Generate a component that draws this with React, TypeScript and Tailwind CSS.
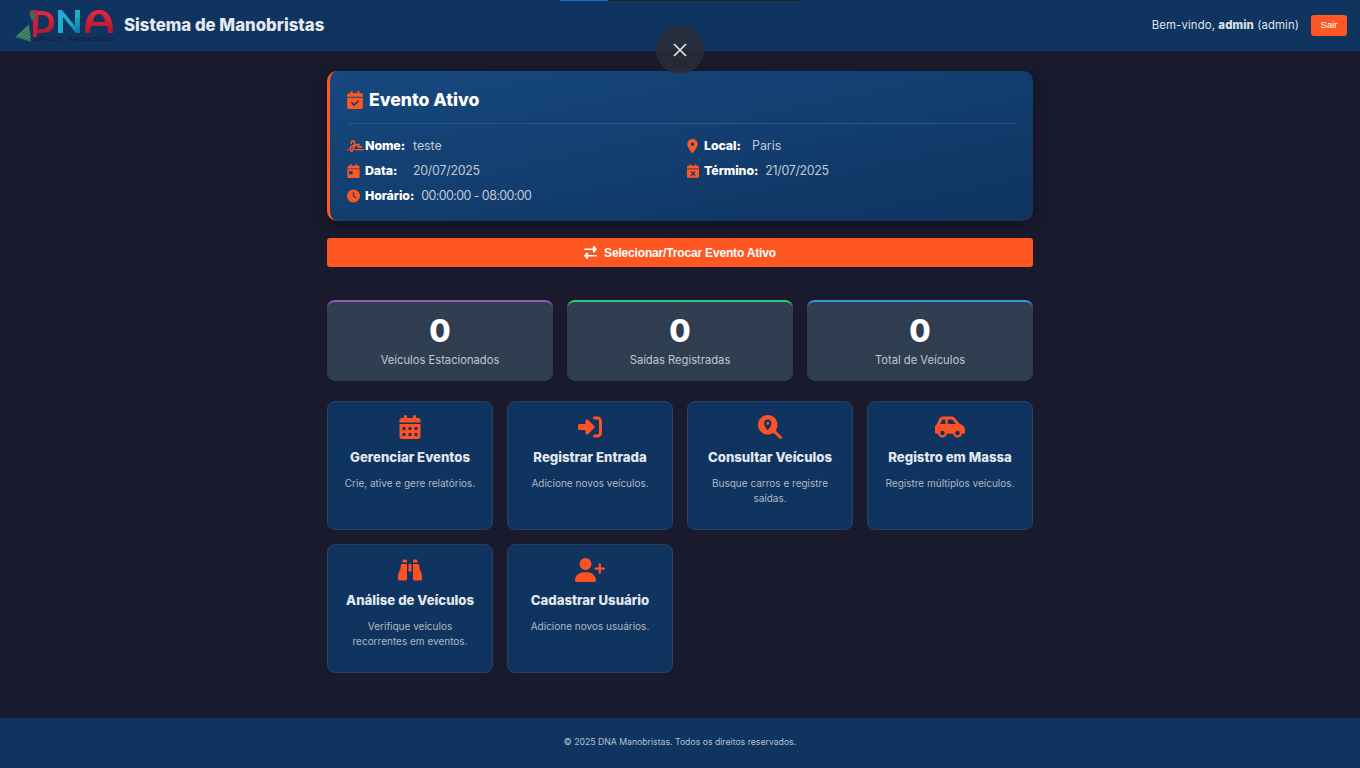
import React from "react";
import {
  FaCalendarCheck, FaSignature, FaCalendarDay, FaClock, FaLocationDot, FaCalendarXmark,
  FaRightLeft, FaCalendarDays, FaRightToBracket, FaMagnifyingGlassLocation, FaCarSide, FaBinoculars, FaUserPlus,
} from "react-icons/fa6";

function Logo() {
  return (
    <svg width="102" height="42" viewBox="0 0 102 42" className="shrink-0">
      <defs>
        <linearGradient id="red" x1="0" y1="0" x2="0" y2="1">
          <stop offset="0" stopColor="#e8283c" />
          <stop offset="1" stopColor="#b0182e" />
        </linearGradient>
        <linearGradient id="blue" x1="0" y1="0" x2="1" y2="1">
          <stop offset="0" stopColor="#2fa8dc" />
          <stop offset="0.55" stopColor="#18b0c8" />
          <stop offset="1" stopColor="#126a9c" />
        </linearGradient>
      </defs>
      <path d="M1 32 L15 19 L17 37 Z" fill="#2a6f68" />
      <path d="M4 31 L15 22 M6 32 L15.5 25 M9 33 L16 28 M12 34 L16.5 31" stroke="#8fb04a" strokeWidth="0.7" />
      <path d="M16 6 q6 -3 9 1 l-2 24 q-2 3 -4 1 l0 -17 q-3 -3 -3 -9 z" fill="#c4203a" />
      <path d="M15 8 l6 -2 l1 7 l-4 3 z" fill="#3d6a58" />
      <path d="M23 6 h5 q12 1 12 11 q0 11 -12 11 h-5 v-4 h5 q7 0 7 -7 q0 -7 -7 -7 h-5 z" fill="url(#red)" />
      <path d="M44 5 h4 l13 16 v-16 h5 v23 h-4 l-13 -16 v16 h-5 z" fill="url(#blue)" />
      <path d="M71 28 q0 -23 14 -23 q14 0 14 23 h-5 q0 -5 -1 -7 h-16 q-1 2 -1 7 z M79 17 h12 q-1 -8 -6 -8 q-5 0 -6 8 z" fill="url(#red)" />
      <text x="19" y="36" fontSize="5.6" textLength="29" lengthAdjust="spacingAndGlyphs" fill="#141c30" fontFamily="'Liberation Sans', sans-serif">SERVIÇOS</text>
      <text x="53" y="36" fontSize="5.6" textLength="46" lengthAdjust="spacingAndGlyphs" fill="#141c30" fontFamily="'Liberation Sans', sans-serif">TERCEIRIZADOS</text>
    </svg>
  );
}

function Info({ icon, label, value, iconBox, track }: { icon: React.ReactNode; label: string; value: string; iconBox: string; track: string }) {
  return (
    <div className="flex items-center h-[25px] text-[12.4px]">
      <span className={`${iconBox} flex justify-center items-center text-[#ff5722] mb-[2px] shrink-0`}>{icon}</span>
      <span className="font-extrabold text-white min-w-[41px] mr-[7px] tracking-[-0.1px]">{label}</span>
      <span className={`text-[#c3c9d3] ${track}`}>{value}</span>
    </div>
  );
}

function Stat({ value, label, border }: { value: string; label: string; border: string }) {
  return (
    <div className={`h-[81px] rounded-lg bg-[#2f3e50] border-t-[2px] ${border} flex flex-col items-center pt-[10px]`}>
      <div className="text-[31px] leading-[38px] font-extrabold text-white">{value}</div>
      <div className="text-[11.2px] leading-[18px] mt-px text-[#c0c6ce]">{label}</div>
    </div>
  );
}

function Action({ icon, title, desc }: { icon: React.ReactNode; title: string; desc: string }) {
  return (
    <div className="h-[129px] rounded-lg bg-[#0f3460] border border-[#2a405e] flex flex-col items-center px-[16px] pt-[11px] text-center">
      <div className="h-[27px] flex items-center justify-center text-[#ff5126] text-[24px]">{icon}</div>
      <div className="mt-[6px] text-[13.2px] leading-[22px] font-extrabold text-[#e4e8ee] whitespace-nowrap">{title}</div>
      <div className="mt-[8px] text-[10px] leading-[15px] text-[#b0b8c2]">{desc}</div>
    </div>
  );
}

export default function App() {
  return (
    <div className="relative h-[768px] flex flex-col bg-[#1a1a2e] overflow-hidden font-['Inter','Liberation_Sans',sans-serif]">
      <header className="h-[51px] shrink-0 bg-[#0f3460] flex items-center justify-between pl-[14px] pr-[13px]">
        <div className="flex items-center gap-[8px]">
          <Logo />
          <span className="text-[16.8px] font-extrabold text-[#e6e9ef]">Sistema de Manobristas</span>
        </div>
        <div className="flex items-center gap-[12px]">
          <span className="text-[11.4px] text-[#dfe4ea] tracking-[0.1px]">
            Bem-vindo, <strong className="font-extrabold">admin</strong> (admin)
          </span>
          <button className="w-[36px] h-[21px] rounded-[3px] bg-[#ff5722] text-white text-[9.5px] font-['Liberation_Sans',sans-serif]">Sair</button>
        </div>
      </header>

      <main className="flex-1 w-[706px] mx-auto pt-[20px]">
        <section className="h-[150px] rounded-[10px] border-l-[3px] border-[#ff5722] bg-gradient-to-br from-[#16487f] to-[#0f3460] shadow-[0_4px_14px_rgba(0,0,0,0.35)] pl-[17px] pr-[16px] pt-[17px]">
          <div className="flex items-center gap-[5px] h-[24px] mb-[11px] -ml-[1px] text-[#ff5722]">
            <FaCalendarCheck className="text-[18px]" />
            <h2 className="text-[17.6px] font-extrabold text-white">Evento Ativo</h2>
          </div>
          <div className="border-t border-[#2b5485] pt-[10px] grid grid-cols-2 gap-x-[10px]">
            <Info icon={<FaSignature className="text-[18px]" />} label="Nome:" value="teste" iconBox="w-[17px] mr-px" track="tracking-[-0.05px]" />
            <Info icon={<FaLocationDot className="text-[14px]" />} label="Local:" value="Paris" iconBox="w-[11px] mr-[6px]" track="tracking-[0px]" />
            <Info icon={<FaCalendarDay className="text-[14px]" />} label="Data:" value="20/07/2025" iconBox="w-[13px] mr-[5px]" track="tracking-[-0.25px]" />
            <Info icon={<FaCalendarXmark className="text-[14px]" />} label="Término:" value="21/07/2025" iconBox="w-[12px] mr-[5px]" track="tracking-[-0.3px]" />
            <Info icon={<FaClock className="text-[14px]" />} label="Horário:" value="00:00:00 - 08:00:00" iconBox="w-[13px] mr-[5px]" track="tracking-[-0.55px]" />
          </div>
        </section>

        <button className="mt-[17px] w-full h-[29px] rounded-[3px] bg-[#ff5722] text-white flex items-center justify-center gap-[7px] text-[12px] tracking-[-0.17px] font-bold font-['Liberation_Sans',sans-serif]">
          <FaRightLeft className="text-[13px]" />
          Selecionar/Trocar Evento Ativo
        </button>

        <div className="mt-[33px] grid grid-cols-3 gap-[14px]">
          <Stat value="0" label="Veículos Estacionados" border="border-[#9b59b6]" />
          <Stat value="0" label="Saídas Registradas" border="border-[#2ecc71]" />
          <Stat value="0" label="Total de Veículos" border="border-[#3498db]" />
        </div>

        <div className="mt-[20px] grid grid-cols-4 gap-[14px]">
          <Action icon={<FaCalendarDays />} title="Gerenciar Eventos" desc="Crie, ative e gere relatórios." />
          <Action icon={<FaRightToBracket />} title="Registrar Entrada" desc="Adicione novos veículos." />
          <Action icon={<FaMagnifyingGlassLocation />} title="Consultar Veículos" desc="Busque carros e registre saídas." />
          <Action icon={<FaCarSide className="text-[30px]" />} title="Registro em Massa" desc="Registre múltiplos veículos." />
          <Action icon={<FaBinoculars />} title="Análise de Veículos" desc="Verifique veículos recorrentes em eventos." />
          <Action icon={<FaUserPlus className="text-[30px]" />} title="Cadastrar Usuário" desc="Adicione novos usuários." />
        </div>
      </main>

      <footer className="h-[50px] shrink-0 bg-[#0f3460] flex items-center justify-center text-[8.7px] text-[#b8c0cc]">
        © 2025 DNA Manobristas. Todos os direitos reservados.
      </footer>

      <div className="absolute top-0 left-[560px] w-[241px] h-px bg-[#222] flex">
        <div className="w-[48px] bg-[#0078d4]" />
      </div>
      <button className="absolute left-[656px] top-[26px] w-[48px] h-[48px] rounded-full bg-[rgba(45,45,55,0.85)] flex items-center justify-center">
        <svg width="16" height="16" viewBox="0 0 16 16"><path d="M2 2 L14 14 M14 2 L2 14" stroke="#dfe3ea" strokeWidth="1.7" /></svg>
      </button>
    </div>
  );
}
